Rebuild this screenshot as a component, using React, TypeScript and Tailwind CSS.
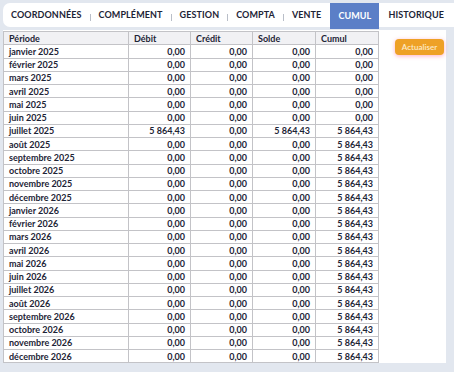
import React from "react";

const tabs = ["COORDONNÉES", "COMPLÉMENT", "GESTION", "COMPTA", "VENTE", "CUMUL", "HISTORIQUE"];
const active = "CUMUL";

const mois = ["janvier", "février", "mars", "avril", "mai", "juin", "juillet", "août", "septembre", "octobre", "novembre", "décembre"];

const montant = "5\u202F864,43";

const rows = [2025, 2026].flatMap((annee) =>
  mois.map((m, i) => {
    const avant = annee === 2025 && i < 6;
    const juillet = annee === 2025 && i === 6;
    return {
      periode: `${m} ${annee}`,
      debit: juillet ? montant : "0,00",
      credit: "0,00",
      solde: juillet ? montant : "0,00",
      cumul: avant ? "0,00" : montant,
    };
  })
);

export default function App() {
  return (
    <div className="min-h-screen bg-[#e2e7ef] pt-[3px] pl-[3px] font-['Lato',sans-serif] text-[#1d2436]">
      <nav className="flex h-[24px] items-start rounded-l-[7px] bg-white">
        {tabs.map((t, i) => (
          <React.Fragment key={t}>
            {i > 0 && t !== active && tabs[i - 1] !== active && (
              <div className="mt-[11px] h-[7px] w-px shrink-0 bg-[#b9bec8]" />
            )}
            {t === active ? (
              <div className="mx-[1px] flex h-[26px] shrink-0 items-center bg-[#5b7fc7] px-[8px] text-[9px] font-bold tracking-[0.1px] text-white">
                {t}
              </div>
            ) : (
              <div className="flex h-[24px] shrink-0 items-center px-[8px] text-[9px] font-bold tracking-[0.1px]">
                {t}
              </div>
            )}
          </React.Fragment>
        ))}
      </nav>

      <div className="mt-[3px] flex h-[333px] w-[443px] items-start bg-white">
        <table className="mt-[1px] w-[375px] table-fixed border-collapse border border-[#a9a9ad] text-[9px] font-bold">
          <colgroup>
            <col className="w-[125px]" />
            <col className="w-[62px]" />
            <col className="w-[62px]" />
            <col className="w-[63px]" />
            <col className="w-[63px]" />
          </colgroup>
          <thead>
            <tr className="h-[13.25px] bg-[#f1f1f4]">
              {["Période", "Débit", "Crédit", "Solde", "Cumul"].map((h) => (
                <th key={h} className="border border-[#c3c3c7] px-[5px] py-0 text-left font-bold leading-none">
                  {h}
                </th>
              ))}
            </tr>
          </thead>
          <tbody>
            {rows.map((r) => (
              <tr key={r.periode} className="h-[13.25px]">
                <td className="border border-[#c3c3c7] px-[5px] py-0 leading-none">{r.periode}</td>
                <td className="border border-[#c3c3c7] px-[5px] py-0 text-right leading-none">{r.debit}</td>
                <td className="border border-[#c3c3c7] px-[5px] py-0 text-right leading-none">{r.credit}</td>
                <td className="border border-[#c3c3c7] px-[5px] py-0 text-right leading-none">{r.solde}</td>
                <td className="border border-[#c3c3c7] px-[5px] py-0 text-right leading-none">{r.cumul}</td>
              </tr>
            ))}
          </tbody>
        </table>
        <div className="ml-[16px] mt-[2px]">
          <button className="h-[16px] w-[49px] rounded-[4px] bg-[#eea126] text-[8px] font-semibold text-[#fdebc9] shadow-[0_1px_4px_rgba(255,110,150,0.55)]">
            Actualiser
          </button>
        </div>
      </div>
    </div>
  );
}
